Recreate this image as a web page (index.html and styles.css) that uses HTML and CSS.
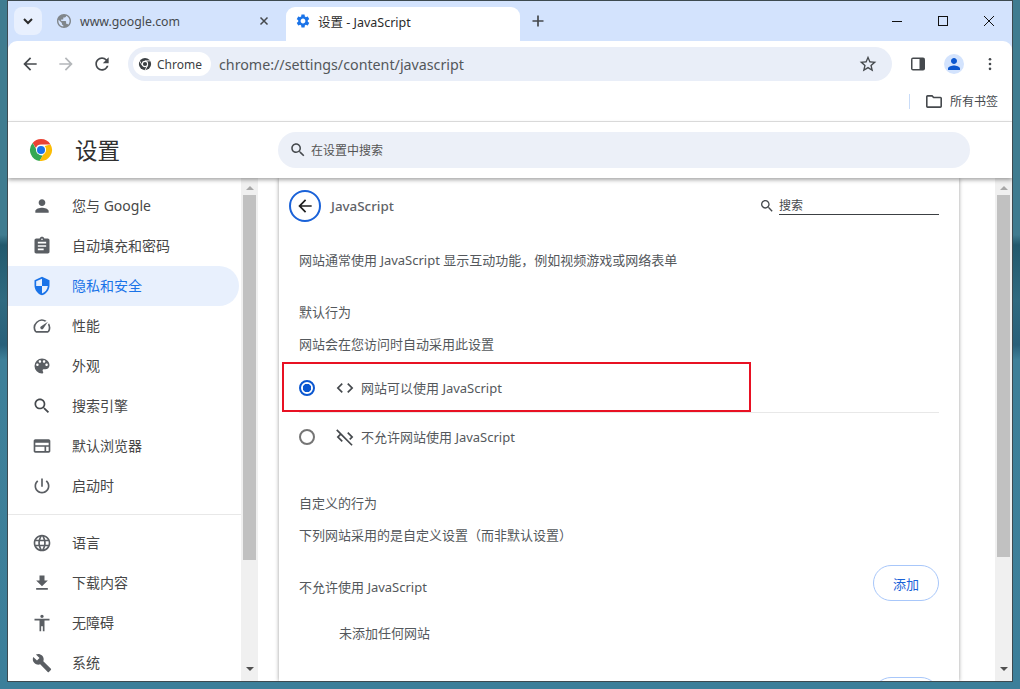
FILE: index.html
```html
<!DOCTYPE html>
<html lang="zh-CN">
<head>
<meta charset="utf-8">
<title>设置 - JavaScript</title>
<link rel="stylesheet" href="styles.css">
</head>
<body>
<div class="window">
  <div class="tabstrip">
    <button class="tabsearch"><svg class="ic16" viewBox="0 0 16 16"><path d="M4 6l4 4 4-4" fill="none" stroke="#2b2b2b" stroke-width="2"/></svg></button>
    <div class="tab inactive">
      <svg class="favicon" viewBox="2 2 20 20"><path fill="#80868b" d="M12 2C6.48 2 2 6.48 2 12s4.48 10 10 10 10-4.48 10-10S17.52 2 12 2zm-1 17.93c-3.95-.49-7-3.85-7-7.93 0-.62.08-1.21.21-1.79L9 15v1c0 1.1.9 2 2 2v1.93zm6.9-2.54c-.26-.81-1-1.39-1.9-1.39h-1v-3c0-.55-.45-1-1-1H8v-2h2c.55 0 1-.45 1-1V7h2c1.1 0 2-.9 2-2v-.41c2.93 1.19 5 4.06 5 7.41 0 2.08-.8 3.97-2.1 5.39z"/></svg>
      <span class="tabtitle">www.google.com</span>
      <svg class="tabclose" viewBox="0 0 10 10"><path d="M1.5 1.5l7 7M8.500 1.500l-7 7" stroke="#45494d" stroke-width="1.500"/></svg>
    </div>
    <div class="tab active">
      <svg class="favicon" viewBox="2 1.500 20 21"><path fill="#1a73e8" d="M19.140 12.940c.04-.3.06-.61.06-.94 0-.32-.02-.64-.07-.94l2.030-1.580c.18-.14.23-.41.12-.61l-1.920-3.320c-.12-.22-.37-.29-.59-.22l-2.390.96c-.5-.38-1.030-.7-1.620-.94l-.36-2.540c-.04-.24-.24-.41-.48-.41h-3.840c-.24 0-.43.17-.47.41l-.36 2.540c-.59.24-1.130.57-1.620.94l-2.390-.96c-.22-.08-.47 0-.59.22L2.740 8.870c-.12.21-.08.47.12.61l2.030 1.580c-.05.3-.09.63-.09.94s.02.64.07.94l-2.030 1.580c-.18.14-.23.41-.12.61l1.920 3.320c.12.22.37.29.59.22l2.390-.96c.5.38 1.030.7 1.620.94l.36 2.540c.05.24.24.41.48.41h3.840c.24 0 .44-.17.47-.41l.36-2.540c.59-.24 1.130-.56 1.620-.94l2.390.96c.22.08.47 0 .59-.22l1.920-3.320c.12-.22.07-.47-.12-.61l-2.010-1.580zM12 15.600c-1.980 0-3.600-1.620-3.600-3.600s1.620-3.600 3.600-3.600 3.600 1.620 3.600 3.600-1.620 3.600-3.600 3.600z"/></svg>
      <span class="tabtitle dark">设置 - JavaScript</span>
    </div>
    <svg class="newtab" viewBox="0 0 12 12"><path d="M6 .5v11M.5 6h11" stroke="#45494d" stroke-width="1.700"/></svg>
    <div class="winctl">
      <svg class="wc" viewBox="0 0 12 12"><path d="M1 6.500h10" stroke="#111" stroke-width="1"/></svg>
      <svg class="wc" viewBox="0 0 12 12"><rect x="1.500" y="1.500" width="9" height="9" fill="none" stroke="#111"/></svg>
      <svg class="wc" viewBox="0 0 12 12"><path d="M1 1l10 10M11 1L1 11" stroke="#111" stroke-width="1"/></svg>
    </div>
  </div>

  <div class="toolbar">
    <svg class="tb back" viewBox="0 0 24 24"><path fill="#45494d" d="M20 11H7.830l5.590-5.590L12 4l-8 8 8 8 1.410-1.410L7.830 13H20v-2z"/></svg>
    <svg class="tb fwd" viewBox="0 0 24 24"><path fill="#b4b7ba" d="M4 11h12.170l-5.590-5.590L12 4l8 8-8 8-1.410-1.410L16.170 13H4v-2z"/></svg>
    <svg class="tb reload" viewBox="0 0 24 24"><path fill="#45494d" d="M17.650 6.350C16.200 4.900 14.210 4 12 4c-4.420 0-7.990 3.580-7.990 8s3.570 8 7.990 8c3.730 0 6.840-2.550 7.730-6h-2.080c-.82 2.330-3.040 4-5.650 4-3.310 0-6-2.690-6-6s2.690-6 6-6c1.660 0 3.140.69 4.220 1.780L13 11h7V4l-2.350 2.350z"/></svg>
    <div class="omnibox">
      <div class="chip">
        <svg class="chipicon" viewBox="0 0 16 16"><circle cx="8" cy="8" r="7" fill="#3c4043"/><circle cx="8" cy="8" r="3.600" fill="#fff"/><circle cx="8" cy="8" r="2.400" fill="#3c4043"/><path d="M8 4.400h6.300M5 9.800L1.800 4.400M11 9.800L8 15" stroke="#fff" stroke-width="1"/></svg>
        <span>Chrome</span>
      </div>
      <span class="url">chrome://settings/content/javascript</span>
      <svg class="tb star" viewBox="0 0 24 24"><path fill="#45494d" d="M22 9.240l-7.190-.62L12 2 9.190 8.630 2 9.240l5.460 4.730L5.820 21 12 17.270 18.180 21l-1.630-7.030L22 9.240zM12 15.400l-3.760 2.270 1-4.280-3.320-2.880 4.380-.38L12 6.100l1.710 4.040 4.380.38-3.320 2.880 1 4.280L12 15.400z"/></svg>
    </div>
    <svg class="sidepanel" viewBox="0 0 16 16"><rect x="1" y="1.500" width="14" height="13" rx="2" fill="#45494d"/><rect x="2.500" y="3" width="7" height="10" fill="#fff"/></svg>
    <div class="avatar"><svg viewBox="0 0 24 24"><path fill="#0b57d0" d="M12 12c2.210 0 4-1.790 4-4s-1.790-4-4-4-4 1.790-4 4 1.790 4 4 4zm0 2c-2.670 0-8 1.340-8 4v2h16v-2c0-2.660-5.330-4-8-4z"/></svg></div>
    <svg class="kebab" viewBox="0 0 4 16"><circle cx="2" cy="2.500" r="1.500" fill="#45494d"/><circle cx="2" cy="8" r="1.500" fill="#45494d"/><circle cx="2" cy="13.500" r="1.500" fill="#45494d"/></svg>
  </div>

  <div class="bookmarks">
    <span class="bmsep"></span>
    <svg class="bmfolder" viewBox="2 4 20 16"><path fill="#45494d" d="M20 6h-8l-2-2H4c-1.100 0-1.990.9-1.990 2L2 18c0 1.100.9 2 2 2h16c1.100 0 2-.9 2-2V8c0-1.100-.9-2-2-2zm0 12H4V6h5.170l2 2H20v10z"/></svg>
    <span class="bmtext">所有书签</span>
  </div>

  <header class="settings-head">
    <svg class="logo" viewBox="0 0 24 24">
      <path fill="#ea4335" d="M12 1a11 11 0 0 1 9.530 5.500H12a5.500 5.500 0 0 0-5.100 3.400L3.600 4.900A11 11 0 0 1 12 1z"/>
      <path fill="#34a853" d="M3.600 4.900l4.600 8.200a5 5 0 0 0 5.700 4.300l-3.300 5.500A11 11 0 0 1 3.600 4.900z"/>
      <path fill="#fbbc04" d="M21.530 6.500A11 11 0 0 1 10.600 22.900l4.700-8.100A5 5 0 0 0 15.500 8z"/>
      <circle cx="12" cy="12" r="5" fill="#fff"/><circle cx="12" cy="12" r="4" fill="#1a73e8"/>
    </svg>
    <h1 class="settings-title">设置</h1>
    <div class="searchbox">
      <svg class="ic18" viewBox="0 0 24 24"><use href="#i-search"/></svg>
      <span>在设置中搜索</span>
    </div>
  </header>

  <svg class="defs" width="0" height="0"><defs><path id="i-search" fill="#45494d" d="M15.500 14h-.79l-.28-.27C15.410 12.590 16 11.110 16 9.500 16 5.910 13.090 3 9.500 3S3 5.910 3 9.500 5.910 16 9.500 16c1.610 0 3.090-.59 4.230-1.570l.27.28v.79l5 4.990L20.490 19l-4.990-5zm-6 0C7.010 14 5 11.990 5 9.500S7.010 5 9.500 5 14 7.010 14 9.500 11.990 14 9.500 14z"/></defs></svg>

  <div class="body">
    <nav class="sidebar">
      <a class="nav"><svg class="navic" viewBox="0 0 24 24"><path d="M12 12c2.210 0 4-1.790 4-4s-1.790-4-4-4-4 1.790-4 4 1.790 4 4 4zm0 2c-2.670 0-8 1.340-8 4v2h16v-2c0-2.660-5.330-4-8-4z"/></svg><span>您与 Google</span></a>
      <a class="nav"><svg class="navic" viewBox="0 0 24 24"><path d="M19 3h-4.180C14.400 1.840 13.300 1 12 1c-1.300 0-2.400.84-2.820 2H5c-1.100 0-2 .9-2 2v14c0 1.100.9 2 2 2h14c1.100 0 2-.9 2-2V5c0-1.100-.9-2-2-2zm-7 0c.55 0 1 .45 1 1s-.45 1-1 1-1-.45-1-1 .45-1 1-1zm2 14H7v-2h7v2zm3-4H7v-2h10v2zm0-4H7V7h10v2z"/></svg><span>自动填充和密码</span></a>
      <a class="nav current"><svg class="navic" viewBox="0 0 24 24"><path d="M12 1L3 5v6c0 5.550 3.840 10.740 9 12 5.160-1.260 9-6.450 9-12V5l-9-4zm0 10.990h7c-.53 4.120-3.280 7.790-7 8.940V12H5V6.300l7-3.110v8.800z"/></svg><span>隐私和安全</span></a>
      <a class="nav"><svg class="navic" viewBox="0 0 24 24"><path d="M20.380 8.570l-1.230 1.850a8 8 0 0 1-.22 7.580H5.070A8 8 0 0 1 15.580 6.850l1.850-1.230A10 10 0 0 0 3.350 19a2 2 0 0 0 1.720 1h13.850a2 2 0 0 0 1.740-1 10 10 0 0 0-.27-10.440zm-9.790 6.840a2 2 0 0 0 2.830 0l5.660-8.490-8.490 5.660a2 2 0 0 0 0 2.830z"/></svg><span>性能</span></a>
      <a class="nav"><svg class="navic" viewBox="0 0 24 24"><path d="M12 3a9 9 0 0 0 0 18c.83 0 1.500-.67 1.500-1.500 0-.39-.15-.74-.39-1.010-.23-.26-.38-.61-.38-.99 0-.83.67-1.500 1.500-1.500H16c2.760 0 5-2.240 5-5 0-4.420-4.030-8-9-8zm-5.500 9c-.83 0-1.500-.67-1.500-1.500S5.670 9 6.500 9 8 9.670 8 10.500 7.330 12 6.500 12zm3-4C8.670 8 8 7.330 8 6.500S8.670 5 9.500 5s1.500.67 1.500 1.500S10.330 8 9.500 8zm5 0c-.83 0-1.500-.67-1.500-1.500S13.670 5 14.500 5s1.500.67 1.500 1.500S15.330 8 14.500 8zm3 4c-.83 0-1.500-.67-1.500-1.500S16.670 9 17.500 9s1.500.67 1.500 1.500-.67 1.500-1.500 1.500z"/></svg><span>外观</span></a>
      <a class="nav"><svg class="navic" viewBox="0 0 24 24"><use href="#i-search"/></svg><span>搜索引擎</span></a>
      <a class="nav"><svg class="navic" viewBox="0 0 24 24"><path d="M20 4H4c-1.100 0-2 .9-2 2v12c0 1.100.9 2 2 2h16c1.100 0 2-.9 2-2V6c0-1.100-.9-2-2-2zm-5 14H4v-5h11v5zm5 0h-3v-5h3v5zm0-7H4V8h16v3z"/></svg><span>默认浏览器</span></a>
      <a class="nav"><svg class="navic" viewBox="0 0 24 24"><path d="M13 3h-2v10h2V3zm4.830 2.170l-1.420 1.420C17.990 7.860 19 9.810 19 12c0 3.870-3.130 7-7 7s-7-3.130-7-7c0-2.190 1.010-4.140 2.580-5.420L6.170 5.170C4.230 6.820 3 9.260 3 12c0 4.970 4.030 9 9 9s9-4.030 9-9c0-2.740-1.230-5.180-3.170-6.830z"/></svg><span>启动时</span></a>
      <hr class="navsep">
      <a class="nav"><svg class="navic" viewBox="0 0 24 24"><path d="M11.990 2C6.470 2 2 6.480 2 12s4.470 10 9.990 10C17.520 22 22 17.520 22 12S17.520 2 11.990 2zm6.930 6h-2.950c-.32-1.250-.78-2.450-1.380-3.560 1.840.63 3.370 1.910 4.330 3.560zM12 4.040c.83 1.200 1.480 2.530 1.910 3.960h-3.820c.43-1.430 1.080-2.760 1.910-3.960zM4.260 14C4.100 13.360 4 12.690 4 12s.1-1.360.26-2h3.380c-.08.66-.14 1.320-.14 2 0 .68.06 1.340.14 2H4.260zm.82 2h2.950c.32 1.250.78 2.450 1.380 3.560-1.840-.63-3.370-1.900-4.330-3.560zm2.950-8H5.080c.96-1.660 2.490-2.930 4.330-3.560C8.810 5.550 8.350 6.750 8.030 8zM12 19.960c-.83-1.200-1.480-2.530-1.910-3.960h3.820c-.43 1.430-1.080 2.760-1.910 3.960zM14.340 14H9.660c-.09-.66-.16-1.320-.16-2 0-.68.07-1.350.16-2h4.680c.09.65.16 1.320.16 2 0 .68-.07 1.340-.16 2zm.25 5.560c.6-1.110 1.060-2.310 1.380-3.560h2.950c-.96 1.650-2.490 2.930-4.330 3.560zM16.360 14c.08-.66.14-1.320.14-2 0-.68-.06-1.340-.14-2h3.380c.16.64.26 1.310.26 2s-.1 1.360-.26 2h-3.380z"/></svg><span>语言</span></a>
      <a class="nav"><svg class="navic" viewBox="0 0 24 24"><path d="M19 9h-4V3H9v6H5l7 7 7-7zM5 18v2h14v-2H5z"/></svg><span>下载内容</span></a>
      <a class="nav"><svg class="navic" viewBox="0 0 24 24"><path d="M12 2c1.100 0 2 .9 2 2s-.9 2-2 2-2-.9-2-2 .9-2 2-2zm9 7h-6v13h-2v-6h-2v6H9V9H3V7h18v2z"/></svg><span>无障碍</span></a>
      <a class="nav"><svg class="navic" viewBox="0 0 24 24"><path d="M22.700 19l-9.100-9.100c.9-2.300.4-5-1.500-6.900-2-2-5-2.400-7.400-1.300L9 6 6 9 1.600 4.700C.4 7.100.9 10.100 2.900 12.100c1.900 1.900 4.600 2.400 6.900 1.500l9.100 9.100c.4.4 1 .4 1.400 0l2.300-2.300c.5-.4.5-1.100.1-1.400z"/></svg><span>系统</span></a>
    </nav>
    <div class="scrollbar"><i class="arrow up"></i><i class="thumb thumb-left"></i><i class="arrow down"></i></div>

    <main class="main">
      <section class="card">
        <div class="subhead">
          <button class="backbtn"><svg viewBox="0 0 24 24"><path fill="#1f1f1f" d="M20 11H7.830l5.590-5.590L12 4l-8 8 8 8 1.410-1.410L7.830 13H20v-2z"/></svg></button>
          <h2 class="subtitle">JavaScript</h2>
          <div class="subsearch">
            <svg class="ic14" viewBox="0 0 24 24"><use href="#i-search"/></svg>
            <span class="subinput">搜索</span>
          </div>
        </div>
        <p class="line desc">网站通常使用 JavaScript 显示互动功能，例如视频游戏或网络表单</p>
        <p class="line gap-sec">默认行为</p>
        <p class="line">网站会在您访问时自动采用此设置</p>
        <div class="options">
          <div class="option sep">
            <span class="radio on"></span>
            <svg class="optic" viewBox="0 0 24 24"><path fill="#45494d" d="M9.400 16.600L4.800 12l4.600-4.600L8 6l-6 6 6 6 1.400-1.400zm5.200 0l4.600-4.600-4.600-4.600L16 6l6 6-6 6-1.400-1.400z"/></svg>
            <span class="optlabel">网站可以使用 JavaScript</span>
          </div>
          <div class="option">
            <span class="radio"></span>
            <svg class="optic" viewBox="0 0 24 24"><path fill="#45494d" d="M19.170 12l-4.580-4.590L16 6l6 6-3.590 3.590L17 14.170 19.170 12zM1.390 4.220l4.190 4.190L2 12l6 6 1.410-1.410L4.830 12 7 9.830l12.780 12.780 1.410-1.410L2.810 2.810 1.390 4.220z"/></svg>
            <span class="optlabel">不允许网站使用 JavaScript</span>
          </div>
        </div>
        <p class="line gap-custom">自定义的行为</p>
        <p class="line">下列网站采用的是自定义设置（而非默认设置）</p>
        <div class="listhead">
          <span class="listtitle">不允许使用 JavaScript</span>
          <button class="addbtn">添加</button>
        </div>
        <p class="line empty">未添加任何网站</p>
        <div class="listhead next"><span></span><button class="addbtn" aria-label="添加"></button></div>
        <div class="redbox"></div>
      </section>
    </main>
    <div class="scrollbar right"><i class="arrow up"></i><i class="thumb thumb-right"></i><i class="arrow down"></i></div>
  </div>
</div>
</body>
</html>
```
FILE: styles.css
```css
* { box-sizing: border-box; }
html, body { margin: 0; height: 100%; }
body {
  width: 1020px;
  height: 689px;
  overflow: hidden;
  background: linear-gradient(180deg, #3f7c90 0, #3f7c90 235px, #22596d 245px, #2f6a80 300px, #28607a 345px, #3e8099 360px, #3c7f9a 689px);
  font-family: "Noto Sans", "Noto Sans CJK SC", sans-serif;
  font-size: 13px;
  color: #474747;
}
.window {
  position: absolute;
  left: 7px;
  top: 0;
  width: 1006px;
  height: 682px;
  border: 1px solid #3d4a50;
  background: #d3e3fd;
  display: flex;
  flex-direction: column;
  overflow: hidden;
}
.defs { position: absolute; }

/* tab strip */
.tabstrip {
  height: 40px;
  flex: none;
  display: flex;
  align-items: flex-end;
  padding-left: 6px;
}
.tabsearch {
  width: 28px;
  height: 28px;
  margin-bottom: 6px;
  border: 0;
  border-radius: 8px;
  background: #e8f0fe;
  padding: 0;
  display: flex;
  align-items: center;
  justify-content: center;
}
.ic16 { width: 16px; height: 16px; flex: none; }
.tab {
  height: 34px;
  display: flex;
  align-items: center;
  padding-bottom: 6px;
  font-size: 12.300px;
}
.tab.inactive { width: 244px; padding-left: 15px; color: #45494d; }
.tab.active { width: 234px; padding-left: 10px; background: #fff; border-radius: 9px 9px 0 0; color: #2b2b2b; }
.favicon { width: 14px; height: 14px; flex: none; margin-right: 9px; }
.tab.active .favicon { margin-right: 8px; }
.tabtitle { flex: 1; white-space: nowrap; }
.tabtitle.dark { font-size: 12.500px; }
.tabclose { width: 10px; height: 10px; margin-right: 17px; flex: none; }
.newtab { width: 12px; height: 12px; margin: 0 0 14px 12px; flex: none; }
.winctl {
  margin-left: auto;
  display: flex;
  gap: 34px;
  height: 40px;
  align-self: flex-start;
  padding: 14px 17px 0 0;
}
.wc { width: 12px; height: 12px; flex: none; }

/* toolbar */
.toolbar {
  height: 40px;
  flex: none;
  background: #fff;
  display: flex;
  align-items: center;
  border-radius: 9px 9px 0 0;
  padding: 6px 0 0 12px;
}
.tb { width: 20px; height: 20px; flex: none; }
.back { margin-right: 16px; }
.fwd { margin-right: 16px; }
.omnibox {
  width: 764px;
  height: 34px;
  margin-left: 16px;
  border-radius: 17px;
  background: #e9eef8;
  display: flex;
  align-items: center;
  padding-left: 5px;
}
.chip {
  width: 78px;
  height: 24px;
  border-radius: 12px;
  background: #fff;
  display: flex;
  align-items: center;
  padding-left: 5px;
  font-size: 12px;
  color: #3c4043;
}
.chipicon { width: 14px; height: 14px; margin-right: 5px; }
.url { margin-left: 8px; flex: 1; font-size: 14.250px; color: #53575b; white-space: nowrap; }
.star { margin-right: 14px; }
.sidepanel { width: 16px; height: 16px; margin-left: 18px; flex: none; }
.avatar {
  width: 20px;
  height: 20px;
  margin-left: 18px;
  border-radius: 50%;
  background: #d3e3fd;
  padding: 1px;
  flex: none;
  display: flex;
}
.kebab { width: 4px; height: 14px; margin-left: 24px; flex: none; }

/* bookmarks */
.bookmarks {
  height: 41px;
  flex: none;
  background: #fff;
  border-bottom: 1px solid #e2e2e2;
  display: flex;
  align-items: center;
  justify-content: flex-end;
  padding: 0 14px 0 0;
}
.bmsep { width: 1px; height: 15px; background: #c9dcf8; margin-right: 16px; }
.bmfolder { width: 16px; height: 13px; margin-right: 8px; }
.bmtext { font-size: 12px; color: #45494d; width: 48px; white-space: nowrap; }

/* settings header */
.settings-head {
  height: 56px;
  flex: none;
  background: #fff;
  display: flex;
  align-items: center;
  padding-left: 21px;
  position: relative;
  z-index: 2;
  box-shadow: 0 2px 4px rgba(0, 0, 0, .35);
}
.logo { width: 24px; height: 24px; flex: none; }
.settings-title {
  margin: 0 0 2px 22px;
  width: 203px;
  font-size: 22.500px;
  font-weight: 400;
  color: #303030;
}
.searchbox {
  width: 692px;
  height: 36px;
  border-radius: 18px;
  background: #ecf0f8;
  display: flex;
  align-items: center;
  padding-left: 11px;
  font-size: 12px;
  color: #555;
}
.searchbox span { margin-bottom: 1px; }
.ic18 { width: 18px; height: 18px; margin-right: 4px; flex: none; }

/* body */
.body { flex: 1; min-height: 0; display: flex; background: #fff; }
.sidebar { width: 233px; flex: none; padding-top: 8px; overflow: hidden; }
.nav {
  height: 40px;
  width: 231px;
  display: flex;
  align-items: center;
  padding-left: 24px;
  border-radius: 0 20px 20px 0;
  font-size: 14px;
  color: #474747;
}
.nav span { padding-bottom: 2px; white-space: nowrap; }
.nav.current { background: #e8f0fd; color: #1a73e8; }
.navic { width: 20px; height: 20px; margin-right: 20px; flex: none; fill: #5a5e63; }
.current .navic { fill: #1a73e8; }
.navsep { margin: 8px 0; border: 0; height: 1px; background: #e8e8e8; width: 233px; }
.scrollbar {
  width: 17px;
  flex: none;
  background: #f0f0f0;
  display: flex;
  flex-direction: column;
  align-items: center;
  padding: 8px 0;
}
.thumb { width: 13px; background: #c1c1c1; display: block; margin-top: 5px; }
.thumb-left { height: 365px; }
.thumb-right { height: 362px; }
.arrow { width: 0; height: 0; border-left: 4px solid transparent; border-right: 4px solid transparent; display: block; flex: none; }
.arrow.up { border-bottom: 4px solid #a8a8a8; }
.arrow.down { border-top: 4px solid #505050; margin-top: auto; margin-bottom: 2px; }

.main { flex: 1; min-width: 0; padding-left: 21px; overflow: hidden; }
.card {
  width: 680px;
  height: 100%;
  background: #fff;
  box-shadow: 0 0 4px rgba(0, 0, 0, .4);
  padding: 8px 20px 0;
  position: relative;
}
.subhead { height: 40px; display: flex; align-items: center; margin-left: -10px; }
.backbtn {
  width: 32px;
  height: 32px;
  border: 2px solid #1a62d8;
  border-radius: 50%;
  background: #fff;
  padding: 4px;
  display: flex;
}
.subtitle { margin: 0 0 0 10px; flex: 1; font-size: 13.400px; font-weight: 500; color: #5f6368; }
.subsearch { display: flex; align-items: center; }
.ic14 { width: 16px; height: 16px; margin-right: 4px; }
.subinput { width: 160px; height: 18px; line-height: 17px; font-size: 12px; border-bottom: 1px solid #3c4043; color: #45494d; }
.line { margin: 0; height: 32px; line-height: 30px; font-size: 13px; color: #54585c; white-space: nowrap; }
.desc { margin-top: 19px; }
.gap-sec { margin-top: 20px; }
.options { margin-top: 3px; }
.option { height: 48px; display: flex; align-items: center; font-size: 13px; color: #54585c; }
.option.sep { height: 49px; border-bottom: 1px solid #e8e8e8; }
.optlabel { padding-bottom: 2px; }
.radio {
  width: 16px;
  height: 16px;
  margin-right: 20px;
  border: 2px solid #757575;
  border-radius: 50%;
  flex: none;
}
.radio.on { border-color: #0b57d0; background: radial-gradient(circle, #0b57d0 0 4px, #fff 4.500px); }
.optic { width: 20px; height: 20px; margin-right: 6px; flex: none; }
.gap-custom { margin-top: 27px; }
.listhead { margin-top: 13px; display: flex; justify-content: space-between; font-size: 13px; color: #54585c; }
.listtitle { padding-top: 12px; }
.addbtn {
  width: 66px;
  height: 36px;
  border: 1px solid #a8c7fa;
  border-radius: 18px;
  background: #fff;
  color: #1a62d8;
  font: inherit;
  font-size: 13px;
  padding: 0;
}
.empty { margin: 17px 0 0 40px; }
.listhead.next { margin-top: 27px; }
.redbox {
  position: absolute;
  left: 3px;
  top: 184px;
  width: 469px;
  height: 50px;
  border: 2px solid #e81123;
}
```
